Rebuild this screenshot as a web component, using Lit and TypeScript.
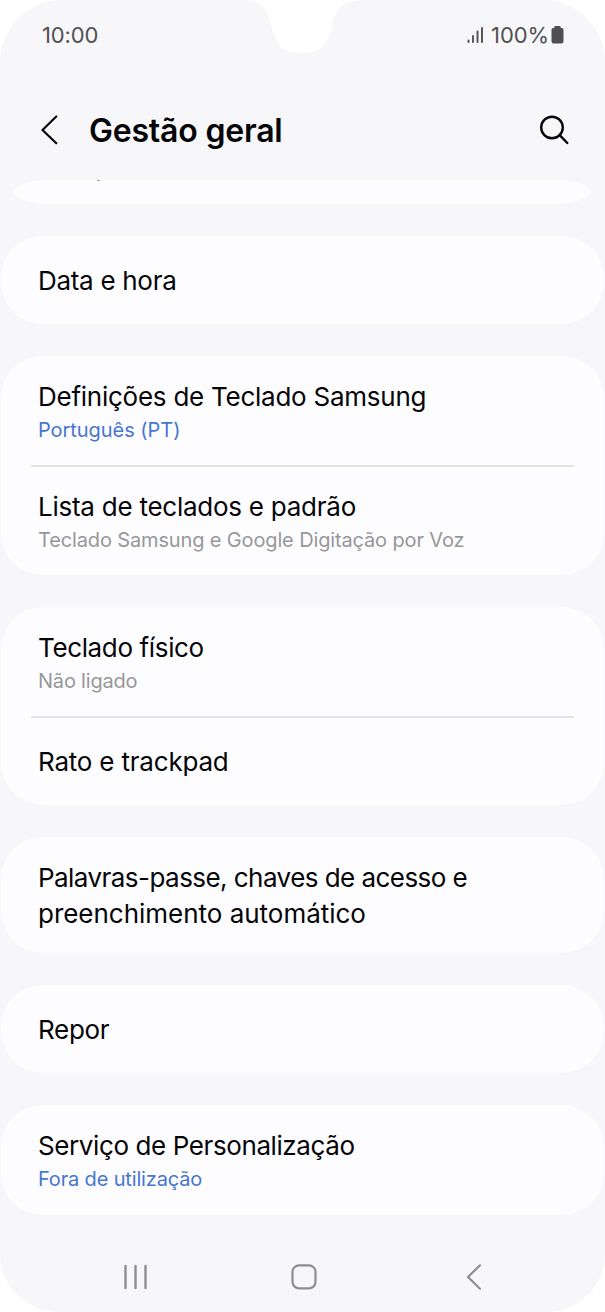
import { LitElement, html, css, nothing } from "lit";
import { customElement } from "lit/decorators.js";

type Line = [text: string, cls: string];
type Row = { title: Line[]; sub?: string; subCls?: string };

const groups: { size: string; rows: Row[] }[] = [
  { size: "single", rows: [{ title: [["Data e hora", "t1"]] }] },
  {
    size: "double",
    rows: [
      { title: [["Definições de Teclado Samsung", "t2"]], sub: "Português (PT)", subCls: "blue s1" },
      { title: [["Lista de teclados e padrão", "t2"]], sub: "Teclado Samsung e Google Digitação por Voz", subCls: "s2" },
    ],
  },
  {
    size: "mixed",
    rows: [
      { title: [["Teclado físico", "t4"]], sub: "Não ligado", subCls: "s3" },
      { title: [["Rato e trackpad", "t5"]] },
    ],
  },
  {
    size: "wrapped",
    rows: [{ title: [["Palavras-passe, chaves de acesso e", "t6"], ["preenchimento automático", "t7"]] }],
  },
  { size: "single", rows: [{ title: [["Repor", "t1"]] }] },
  {
    size: "last",
    rows: [{ title: [["Serviço de Personalização", "t8"]], sub: "Fora de utilização", subCls: "blue s4" }],
  },
];

@customElement("app-root")
export class AppRoot extends LitElement {
  static styles = css`
    :host { display: block; background: #fff; font-family: Inter, "Liberation Sans", sans-serif; color: #050507; }
    * { box-sizing: border-box; }
    .screen { position: relative; display: flex; flex-direction: column; width: 605px; height: 1312px; background: #f7f7f9; border-radius: 62px 62px 58px 58px; overflow: hidden; }
    svg { display: block; flex: none; }
    .notch { position: absolute; top: 0; left: 243px; }
    .status { height: 70px; padding: 0 41px 0 42px; display: flex; align-items: center; color: #505052; font-size: 22px; }
    .time { flex: 1; letter-spacing: -0.15px; }
    .percent { margin: 0 2px 0 7px; letter-spacing: -0.1px; }
    .header { height: 110px; padding: 10px 36px 0 40px; display: flex; align-items: center; }
    h1 { flex: 1; margin: 2px 0 0 30px; font-size: 32px; line-height: 40px; font-weight: 600; letter-spacing: -0.2px; }
    .list { display: flex; flex-direction: column; gap: 32px; }
    .peek { height: 24px; margin: 0 12px; background: #fdfdff; padding-left: 85px; clip-path: path("M0 12C5 6 16 0 33 0H547C564 0 575 6 580 12C575 18 564 24 542 24H38C16 24 5 18 0 12Z"); }
    .tail { width: 3px; height: 1px; background: #a4a4a6; }
    .card { background: #fdfdff; margin: 0 1px; border-radius: 42px; display: flex; flex-direction: column; }
    .single { height: 88px; }
    .double { height: 219px; }
    .mixed { height: 198px; }
    .wrapped { height: 116px; }
    .last { height: 110px; }
    .row { flex: 1; padding: 2px 37px 0; display: flex; flex-direction: column; justify-content: center; }
    .row.two { flex: none; height: 109px; padding-top: 3px; }
    .rule { height: 2px; margin: 0 30px -1px; background: #e4e4e6; flex: none; }
    .title { font-size: 26px; line-height: 36px; white-space: nowrap; }
    .t1 { letter-spacing: -0.3px; }
    .t2 { letter-spacing: -0.25px; }
    .t4 { letter-spacing: -0.36px; }
    .t5 { letter-spacing: -0.2px; }
    .t6 { letter-spacing: -0.55px; }
    .t7 { letter-spacing: -0.02px; }
    .t8 { letter-spacing: -0.4px; }
    .sub { font-size: 20px; line-height: 30px; color: #97979a; white-space: nowrap; }
    .s1 { letter-spacing: -0.05px; }
    .s2 { letter-spacing: -0.14px; }
    .s3 { letter-spacing: -0.2px; }
    .s4 { letter-spacing: -0.16px; }
    .blue { color: #4676d0; }
    .nav { height: 97px; display: flex; padding: 48px 123px 0 123px; justify-content: space-between; }
    .home { margin-right: 5px; }
  `;

  render() {
    return html`
      <div class="screen">
        <svg class="notch" width="118" height="54" viewBox="0 0 118 54">
          <path d="M0 0H118C102 1 94 7 90 22C86 43 79 53 59 53C39 53 32 43 28 24C24 7 17 1 0 0Z" fill="#fff" />
        </svg>
        <div class="status">
          <span class="time">10:00</span>
          <svg width="17" height="18" viewBox="0 0 17 18" stroke="#505052" stroke-width="1.9" stroke-linecap="round">
            <path d="M1.5 14.5V16M6 10V16M10.5 5.5V16M15 2V16" />
          </svg>
          <span class="percent">100%</span>
          <svg width="13" height="18" viewBox="0 0 13 18" fill="#505052">
            <path d="M4 0H9Q9.6 0 9.8 2H11Q12.5 2 12.5 4V15Q12.5 17.5 10.5 17.5H2.5Q.5 17.5 .5 15V4Q.5 2 2 2H3.2Q3.4 0 4 0Z" />
          </svg>
        </div>
        <div class="header">
          <svg width="19" height="32" viewBox="0 0 19 32" fill="none" stroke="#050507" stroke-width="2.2" stroke-linecap="round" stroke-linejoin="round">
            <path d="M16.3 2.5L2.5 16L16.3 29.2" />
          </svg>
          <h1><span>Gestão geral</span></h1>
          <svg width="30" height="30" viewBox="0 0 30 30" fill="none" stroke="#050507" stroke-width="2.4" stroke-linecap="round">
            <circle cx="13" cy="12.5" r="10.8" />
            <path d="M20.7 20.2L28.3 28" />
          </svg>
        </div>
        <div class="list">
          <div class="peek"><div class="tail"></div></div>
          ${groups.map(
            (g) => html`<section class="card ${g.size}">
              ${g.rows.map(
                (r, i) => html`${i ? html`<div class="rule"></div>` : nothing}
                  <div class="row ${r.sub ? "two" : ""}">
                    ${r.title.map(([text, cls]) => html`<div class="title ${cls}">${text}</div>`)}
                    ${r.sub ? html`<div class="sub ${r.subCls}">${r.sub}</div>` : nothing}
                  </div>`
              )}
            </section>`
          )}
        </div>
        <div class="nav">
          <svg width="25" height="28" viewBox="0 0 25 28" stroke="#8e8e90" stroke-width="2.4" stroke-linecap="round">
            <path d="M2.5 3V25M12.5 3V25M22.5 3V25" />
          </svg>
          <svg class="home" width="28" height="28" viewBox="0 0 28 28" fill="none" stroke="#8e8e90" stroke-width="2.2">
            <rect x="2.5" y="2.3" width="23" height="23" rx="6.5" />
          </svg>
          <svg width="17" height="28" viewBox="0 0 17 28" fill="none" stroke="#8e8e90" stroke-width="2.2" stroke-linecap="round" stroke-linejoin="round">
            <path d="M15 2.3L3 14L15 25.7" />
          </svg>
        </div>
      </div>
    `;
  }
}
